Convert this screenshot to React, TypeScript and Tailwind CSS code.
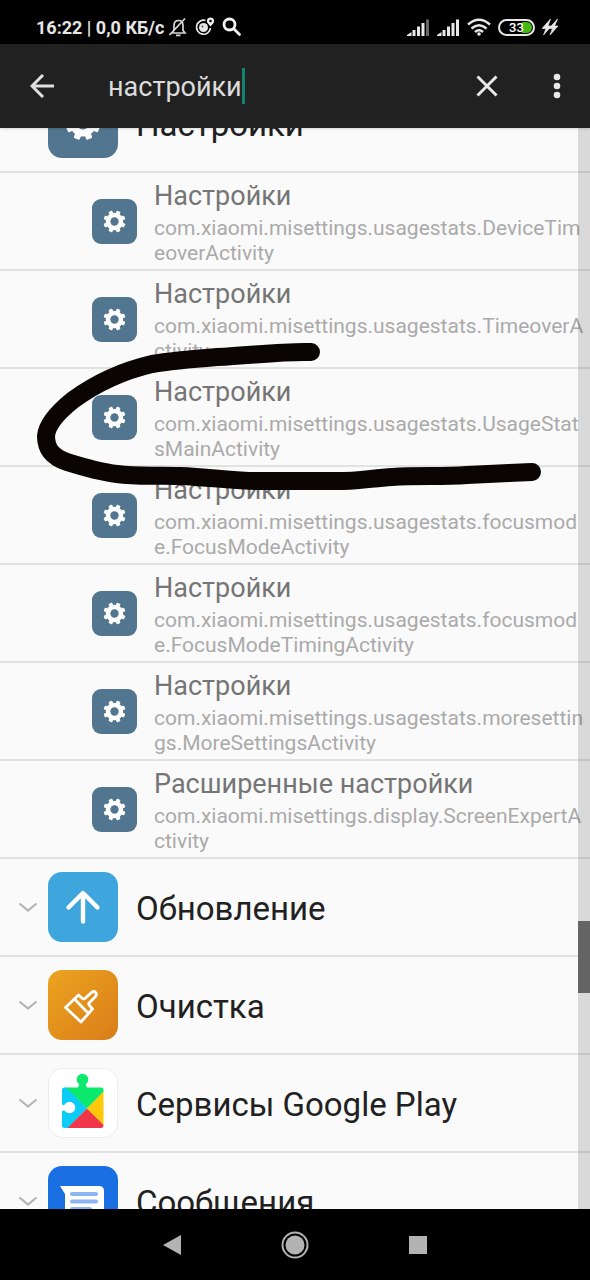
import React from 'react';

type IconKind = 'gear' | 'update' | 'cleaner' | 'play' | 'messages';

interface AppEntry {
    name: string;
    icon: IconKind;
    expanded?: boolean;
    activities?: { name: string; component: string }[];
}

const apps: AppEntry[] = [
    {
        name: 'Настройки',
        icon: 'gear',
        expanded: true,
        activities: [
            { name: 'Настройки', component: 'com.xiaomi.misettings.usagestats.DeviceTimeoverActivity' },
            { name: 'Настройки', component: 'com.xiaomi.misettings.usagestats.TimeoverActivity' },
            { name: 'Настройки', component: 'com.xiaomi.misettings.usagestats.UsageStatsMainActivity' },
            { name: 'Настройки', component: 'com.xiaomi.misettings.usagestats.focusmode.FocusModeActivity' },
            { name: 'Настройки', component: 'com.xiaomi.misettings.usagestats.focusmode.FocusModeTimingActivity' },
            { name: 'Настройки', component: 'com.xiaomi.misettings.usagestats.moresettings.MoreSettingsActivity' },
            { name: 'Расширенные настройки', component: 'com.xiaomi.misettings.display.ScreenExpertActivity' },
        ],
    },
    { name: 'Обновление', icon: 'update' },
    { name: 'Очистка', icon: 'cleaner' },
    { name: 'Сервисы Google Play', icon: 'play' },
    { name: 'Сообщения', icon: 'messages' },
];

const TOOTH_ANGLES = [22.5, 67.5, 112.5, 157.5, 202.5, 247.5, 292.5, 337.5];

const GearIcon = ({ className }: { className: string }) => (
    <svg viewBox="0 0 70 70" className={className}>
        <rect width="70" height="70" rx="14" fill="#52768f" />
        <g fill="#fff">
            <circle cx="35" cy="35" r="13.5" />
            {TOOTH_ANGLES.map((a) => (
                <rect key={a} x="31.8" y="17.8" width="6.4" height="8" rx="1.5" transform={`rotate(${a} 35 35)`} />
            ))}
        </g>
        <circle cx="35" cy="35" r="6.5" fill="#52768f" />
    </svg>
);

const AppIcon = ({ kind }: { kind: IconKind }) => {
    const size = 'w-[70px] h-[70px] shrink-0';
    if (kind === 'gear') return <GearIcon className={size} />;
    if (kind === 'update') {
        return (
            <svg viewBox="0 0 70 70" className={size}>
                <rect width="70" height="70" rx="14" fill="#3ea6dd" />
                <path d="M20.5 35.5 L35 21 L49.500 35.5 M35 22 V49.5" fill="none" stroke="#fff" strokeWidth="4.4" strokeLinecap="round" strokeLinejoin="round" />
            </svg>
        );
    }
    if (kind === 'cleaner') {
        return (
            <svg viewBox="0 0 70 70" className={size}>
                <defs>
                    <linearGradient id="cleaner" x1="0" y1="0" x2="1" y2="1">
                        <stop offset="0" stopColor="#eca420" />
                        <stop offset="1" stopColor="#d97c18" />
                    </linearGradient>
                </defs>
                <rect width="70" height="70" rx="14" fill="url(#cleaner)" />
                <path
                    d="M17.5 37.5 L30.500 25 L34.5 28.5 Q36 29.5 37.5 28 L43.5 22.5 C46.5 20 50 23.5 47.5 26.5 L41.5 32.5 Q40 34 41.5 35.5 L44.5 39 L33 52 Z M26.5 29 L40.5 43.5"
                    fill="none"
                    stroke="#fff"
                    strokeWidth="2.8"
                    strokeLinejoin="round"
                />
            </svg>
        );
    }
    if (kind === 'play') {
        return (
            <svg viewBox="0 0 70 70" className={size}>
                <rect x="0.5" y="0.5" width="69" height="69" rx="14" fill="#fff" stroke="#ececec" />
                <path d="M17 19.5 H53 Q55.5 19.5 55.5 22 V24 L39 40.500 L17 20 Z" fill="#0bea6c" />
                <circle cx="34.5" cy="11.5" r="5.800" fill="#0bea6c" />
                <path d="M31 15 H38 V18 L39.5 20 H29.5 L31 18 Z" fill="#0bea6c" />
                <path d="M16.5 19.5 Q14 19.5 14 22 V57.5 Q14 60 16.5 60 H20 L39 40.5 L18 19.5 Z" fill="#0bccf7" />
                <path d="M39 40.5 L55.5 23.5 V57.5 Z" fill="#fdc90a" />
                <path d="M19.5 60 L39 40.5 L55.5 57 Q55.5 60 53 60 Z" fill="#f1364a" />
                <circle cx="21.5" cy="39.5" r="5.8" fill="#fff" />
                <path d="M13 35.5 L15 37 H19 V42.5 H15 L13 44 Z" fill="#fff" />
            </svg>
        );
    }
    return (
        <svg viewBox="0 0 70 70" className={size}>
            <rect width="70" height="70" rx="14" fill="#1a70e2" />
            <path d="M12 20 H51 Q56 20 56 25 V49 Q56 54 51 54 H22 Q17 54 17 49 V28 Z" fill="#fff" />
            <path d="M24 28 H48 M24 35.500 H48 M24 43 H42" stroke="#8fb4f2" strokeWidth="4" strokeLinecap="round" />
        </svg>
    );
};

const SignalIcon = ({ weak }: { weak?: boolean }) => (
    <svg viewBox="0 0 23 17" className="w-[23px] h-[17px]" fill="#e8e8e8">
        <path d="M0 17 V16 L4.500 13 V17 Z" />
        <rect x="5.5" y="11" width="3" height="6" />
        <rect x="10" y="7.5" width="3" height="9.5" />
        <rect x="14.5" y="4" width="3" height="13" />
        <rect x="19" y="0.5" width="3" height="16.5" fill={weak ? '#666' : '#e8e8e8'} />
    </svg>
);

const StatusBar = () => (
    <div className="h-11 shrink-0 bg-black pl-9 pr-8 pt-[10px] flex items-center text-[#e6e6e6]">
        <span className="text-[18px] leading-6 pt-px font-bold whitespace-nowrap">16:22 | 0,0 КБ/с</span>
        <div className="flex items-center gap-[7px] ml-1">
            <svg viewBox="0 0 20 20" className="w-5 h-5" fill="none" stroke="#d8d8d8" strokeWidth="1.7">
                <path d="M3.500 16 H17 L15 13.5 V8.500 C15 5 13 3.500 10.500 3.500 C8 3.500 6 5 6 8.500 V13.500 Z M8 18.300 H12.500 M1.500 18 L17 1.500" />
            </svg>
            <svg viewBox="0 0 20 20" className="w-5 h-5" fill="none" stroke="#e8e8e8">
                <path d="M10.5 3.5 A7 7 0 1 0 15.5 11" strokeWidth="1.700" />
                <circle cx="8.5" cy="10.5" r="4.500" fill="#e8e8e8" stroke="none" />
                <circle cx="7.5" cy="9.5" r="1" fill="#555" stroke="none" />
                <path d="M15.5 0.5 C18.500 0.5 20 3.500 18.500 6 L15.5 9.5 L12.5 6 C11 3.500 12.500 0.5 15.5 0.5 Z" fill="#f2f2f2" stroke="none" />
                <circle cx="15.5" cy="4" r="1.300" fill="#000" stroke="none" />
            </svg>
            <svg viewBox="0 0 20 20" className="w-5 h-5" fill="none" stroke="#f2f2f2" strokeWidth="2.8" strokeLinecap="round">
                <circle cx="7.5" cy="7.5" r="5.5" />
                <path d="M12 12 L17.5 17.5" />
            </svg>
        </div>
        <div className="flex items-center gap-[7px] ml-auto">
            <SignalIcon weak />
            <SignalIcon />
            <svg viewBox="0 0 24 18" className="w-6 h-[18px]" fill="none" stroke="#e8e8e8" strokeWidth="2.6">
                <path d="M1 6.500 Q12 -3 23 6.500 M4.500 10.500 Q12 4 19.500 10.500 M8 14 Q12 10.500 16 14" />
                <circle cx="12" cy="16" r="1.800" fill="#e8e8e8" stroke="none" />
            </svg>
            <div className="w-[37px] h-[17px] rounded-full border-2 border-[#e8e8e8] flex items-center justify-end relative">
                <span className="w-[10px] h-[11px] rounded-r-full bg-[#45b814] mr-px" />
                <span className="absolute inset-0 text-center text-[13px] leading-[14px] font-medium text-white">33</span>
            </div>
            <svg viewBox="0 0 16 16" className="w-4 h-4" fill="#e8e8e8">
                <path d="M8.500 0 L0 9.500 H4 L1.500 16 L9.500 7 H6 Z M15.500 0 L7 9.500 H10.500 L8 16 L16 7 H12.500 Z" stroke="#e8e8e8" strokeWidth="0.7" />
            </svg>
        </div>
    </div>
);

const SearchBar = () => (
    <header className="h-[84px] shrink-0 bg-[#212121] flex items-center pl-[30px] pr-[22px] relative z-10 shadow-sm">
        <button type="button" aria-label="Назад">
            <svg viewBox="0 0 24 24" className="w-6 h-6" fill="none" stroke="#e0e0e0" strokeWidth="3">
                <path d="M24 12 H2.500 M13 1 L2 12 L13 23" />
            </svg>
        </button>
        <div className="flex flex-1 min-w-0 items-center ml-[54px]">
            <input
                type="text"
                aria-label="Поиск"
                defaultValue="настройки"
                className="field-sizing-content bg-transparent pt-0.5 text-[27px] leading-9 text-[#dcdcdc] outline-none"
            />
            <span className="w-[3px] h-9 bg-[#118270]" />
        </div>
        <button type="button" aria-label="Очистить">
            <svg viewBox="0 0 22 22" className="w-[22px] h-[22px]" fill="none" stroke="#e8e8e8" strokeWidth="3">
                <path d="M1.5 1.5 L20.5 20.5 M20.5 1.5 L1.5 20.5" />
            </svg>
        </button>
        <button type="button" aria-label="Ещё" className="ml-12">
            <svg viewBox="0 0 22 26" className="w-[22px] h-[26px]" fill="#e8e8e8">
                <circle cx="11" cy="4" r="3.3" />
                <circle cx="11" cy="13" r="3.3" />
                <circle cx="11" cy="22" r="3.3" />
            </svg>
        </button>
    </header>
);

const AppRow = ({ app }: { app: AppEntry }) => (
    <div className="h-[98px] border-b-2 border-[#e2e2e2] flex items-center pl-[18px]">
        <button type="button" aria-label={app.name} aria-expanded={!!app.expanded} className="mr-[10px]">
            <svg viewBox="0 0 20 10" className="w-5 h-[10px]" fill="none" stroke="#b5b5b5" strokeWidth="2.2">
                <path d={app.expanded ? 'M1.5 8.5 L10 1.5 L18.5 8.5' : 'M1.5 1.5 L10 8.5 L18.5 1.5'} />
            </svg>
        </button>
        <AppIcon kind={app.icon} />
        <span className="ml-[18px] pt-1 text-[33px] leading-10 text-[#212121] whitespace-nowrap">{app.name}</span>
    </div>
);

const ActivityRow = ({ name, component }: { name: string; component: string }) => (
    <div className="h-[98px] border-b-2 border-[#e2e2e2] flex items-center pl-[92px] pr-1">
        <GearIcon className="w-[45px] h-[45px] shrink-0" />
        <div className="ml-[17px] pt-1 flex-1 min-w-0">
            <div className="mb-1 text-[27px] leading-8 text-[#757575]">{name}</div>
            <div className="text-[21px] leading-[25px] text-[#aaaaaa] break-all">{component}</div>
        </div>
    </div>
);

const App: React.FC = () => (
    <div className="h-screen flex flex-col overflow-hidden bg-[#fafafa] font-[Roboto,sans-serif]">
        <StatusBar />
        <SearchBar />

        <main className="flex-1 min-h-0 overflow-hidden relative">
            <div className="-mt-[53px]">
                {apps.map((app) => (
                    <React.Fragment key={app.name}>
                        <AppRow app={app} />
                        {app.activities?.map((activity) => (
                            <ActivityRow key={activity.component} {...activity} />
                        ))}
                    </React.Fragment>
                ))}
            </div>

            {/* Scroll track and thumb */}
            <div className="absolute inset-y-0 right-0 w-3 bg-black/13">
                <div className="mt-[793px] h-[72px] bg-[#646464]" />
            </div>

            {/* Marker stroke round the usage stats entry */}
            <svg viewBox="0 0 520 160" className="absolute left-[30px] top-[202px] w-[520px] h-[160px] pointer-events-none">
                <path
                    d="M281 22 C255 21 225 25 187 27 C162 29 140 31 122 34 C92 41 65 54 43 70 C28 82 17 94 16 106 C16 121 25 128 37 132 C53 137 70 142 87 144 C108 147 128 145 150 146 C178 147 205 151 227 151 H300 C325 152 342 148 362 147 C390 145 410 147 437 145 C462 144 480 143 502 142"
                    fill="none"
                    stroke="#0a0503"
                    strokeWidth="18"
                    strokeLinecap="round"
                    strokeLinejoin="round"
                />
            </svg>
        </main>

        <nav className="h-[71px] shrink-0 bg-black flex items-center justify-center gap-[100px]">
            <button type="button" aria-label="Назад">
                <svg viewBox="0 0 18 20" className="w-[18px] h-5" fill="#b3b3b3">
                    <path d="M18 0 V20 L0 10 Z" />
                </svg>
            </button>
            <button type="button" aria-label="Домой">
                <svg viewBox="0 0 28 28" className="w-7 h-7">
                    <circle cx="14" cy="14" r="12.5" fill="none" stroke="#b3b3b3" strokeWidth="2" />
                    <circle cx="14" cy="14" r="9.5" fill="#b3b3b3" />
                </svg>
            </button>
            <button type="button" aria-label="Недавние" className="w-[18px] h-[18px] bg-[#b3b3b3]" />
        </nav>
    </div>
);

export default App;
